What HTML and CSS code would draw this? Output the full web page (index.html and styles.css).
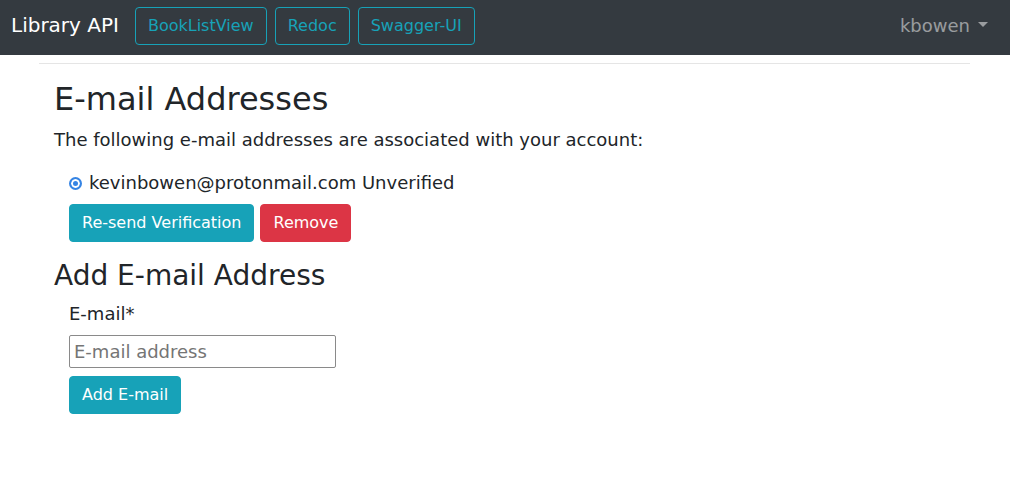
FILE: index.html
```html
<!DOCTYPE html>
<html>
<head>
<meta charset="utf-8">
<link rel="stylesheet" href="styles.css">
</head>
<body>
<nav class="navbar">
  <a class="brand" href="#">Library API</a>
  <div class="nav-buttons">
    <a class="btn-outline" href="#">BookListView</a>
    <a class="btn-outline" href="#">Redoc</a>
    <a class="btn-outline" href="#">Swagger-UI</a>
  </div>
  <a class="user" href="#">kbowen<span class="caret"></span></a>
</nav>
<div class="container">
  <hr class="rule">
  <div class="content">
    <h1 class="title">E-mail Addresses</h1>
    <p class="intro">The following e-mail addresses are associated with your account:</p>
    <form class="email-list">
      <div class="radio-row">
        <label class="radio-label"><input type="radio" name="email" checked class="radio"> kevinbowen@protonmail.com Unverified</label>
      </div>
      <div class="button-row">
        <button type="button" class="btn btn-info">Re-send Verification</button>
        <button type="button" class="btn btn-danger">Remove</button>
      </div>
    </form>
    <h2 class="subtitle">Add E-mail Address</h2>
    <form class="add-form">
      <label class="field-label">E-mail*</label>
      <input class="field" type="email" placeholder="E-mail address">
      <div><button type="button" class="btn btn-info">Add E-mail</button></div>
    </form>
  </div>
</div>
</body>
</html>
```
FILE: styles.css
```css
* { box-sizing: border-box; }
html, body { margin: 0; padding: 0; }
body {
  font-family: "DejaVu Sans", sans-serif;
  font-size: 18px;
  line-height: 1.5;
  color: #212529;
  background: #fff;
}
a { text-decoration: none; }
.navbar {
  height: 55px;
  background: #343a40;
  display: flex;
  align-items: flex-start;
  padding: 7px 22px 0 11px;
}
.brand {
  color: #fff;
  font-size: 20px;
  line-height: 30px;
  margin: 3px 16px 0 0;
}
.nav-buttons { display: flex; gap: 8px; }
.btn-outline {
  color: #17a2b8;
  border: 1px solid #17a2b8;
  border-radius: 4px;
  padding: 6px 12px;
  font-size: 16px;
  line-height: 24px;
  height: 38px;
}
.user {
  margin-left: auto;
  color: rgba(255,255,255,.5);
  font-size: 18px;
  line-height: 27px;
  margin-top: 5px;
  display: flex;
  align-items: center;
}
.caret {
  display: inline-block;
  width: 0; height: 0;
  margin-left: 8px;
  border-top: 5px solid rgba(255,255,255,.5);
  border-left: 5px solid transparent;
  border-right: 5px solid transparent;
  margin-top: -3px;
}
.container {
  width: 960px;
  margin: 0 auto;
  padding: 0 15px;
}
.rule {
  margin: 8px 0 0 -1px;
  border: 0;
  border-top: 1px solid rgba(0,0,0,.1);
}
.content { padding: 0 0 0 14px; }
.title {
  font-size: 32px;
  font-weight: 400;
  line-height: 1.2;
  margin: 16px 0 8px;
}
.intro { margin: 0 0 16px; }
.email-list { margin: 0; padding-left: 15px; }
.radio-row { margin: 0 0 7px; }
.radio-label { display: inline-flex; align-items: center; }
.radio {
  appearance: none;
  -webkit-appearance: none;
  margin: 1px 7px 0 0;
  width: 13px; height: 13px;
  border-radius: 50%;
  border: 2px solid #3584e4;
  background: #3584e4;
  box-shadow: inset 0 0 0 2px #fff;
}
.button-row { display: flex; gap: 6px; }
.btn {
  font-family: inherit;
  font-size: 16px;
  line-height: 24px;
  padding: 6px 12px;
  border: 1px solid transparent;
  border-radius: 4px;
  color: #fff;
  cursor: pointer;
}
.btn-info { background: #17a2b8; border-color: #17a2b8; }
.btn-danger { background: #dc3545; border-color: #dc3545; }
.subtitle {
  font-size: 28px;
  font-weight: 400;
  line-height: 1.2;
  margin: 17px 0 8px;
}
.add-form { padding-left: 15px; }
.field-label { display: block; margin-bottom: 8px; }
.field {
  display: block;
  width: 267px;
  height: 33px;
  font-family: inherit;
  font-size: 18px;
  padding: 1px 4px;
  border: 1px solid #8a8a8a;
  border-radius: 2px;
  margin-bottom: 8px;
}
.field::placeholder { color: #757575; }
```
